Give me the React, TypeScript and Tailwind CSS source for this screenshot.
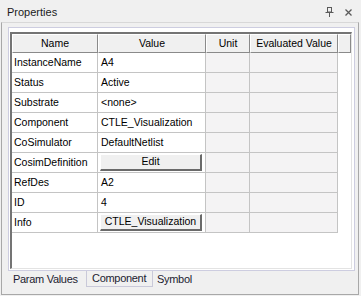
import React from "react"

type Row = { name: string; value: string; button?: boolean }

const rows: Row[] = [
  { name: "InstanceName", value: "A4" },
  { name: "Status", value: "Active" },
  { name: "Substrate", value: "<none>" },
  { name: "Component", value: "CTLE_Visualization" },
  { name: "CoSimulator", value: "DefaultNetlist" },
  { name: "CosimDefinition", value: "Edit", button: true },
  { name: "RefDes", value: "A2" },
  { name: "ID", value: "4" },
  { name: "Info", value: "CTLE_Visualization", button: true },
]

const font = { fontFamily: '"Liberation Sans", Arial, sans-serif' }

function PinIcon() {
  return (
    <svg width="9" height="10" viewBox="0 0 9 10" className="text-[#5a5a5a]">
      <rect x="2.5" y="0.5" width="4" height="4.5" fill="none" stroke="currentColor" />
      <line x1="0.5" y1="5.5" x2="8.5" y2="5.5" stroke="currentColor" />
      <line x1="4.5" y1="5.5" x2="4.5" y2="10" stroke="currentColor" />
    </svg>
  )
}

function CloseIcon() {
  return (
    <svg width="7" height="7" viewBox="0 0 7 7" className="text-[#5a5a5a]">
      <path d="M0.5 0.5 L6.5 6.5 M6.5 0.5 L0.5 6.5" stroke="currentColor" strokeWidth="1.3" />
    </svg>
  )
}

function HeaderCell({ label, w }: { label: string; w: string }) {
  return (
    <div
      className={`${w} flex h-full items-center justify-center border-l border-t border-white border-r border-r-[#8a8a8a] border-b border-b-[#8a8a8a] bg-[#f0f0f0] text-[10.5px] text-black`}
    >
      {label}
    </div>
  )
}

export default function App() {
  return (
    <div className="flex h-[296px] w-[361px] flex-col bg-[#f0f0f0]" style={font}>
      {/* Title bar */}
      <div className="flex h-[22px] items-center justify-between pl-[7px] pr-[9px] pt-[2px]">
        <span className="text-[11px] text-[#1b1b1b]">Properties</span>
        <div className="flex items-center gap-[11px]">
          <PinIcon />
          <CloseIcon />
        </div>
      </div>

      {/* Body */}
      <div className="mb-px ml-px mr-[2px] flex flex-1 flex-col border-x border-b border-t border-[#a8a8a8] border-t-[#d8d8d8]">
        {/* Grid frame */}
        <div className="ml-[6px] mr-[3px] mt-[4px] flex h-[244px] flex-col border border-[#cdcde0] bg-white pb-px pl-px pr-[2px] pt-[4px]">
          <div className="flex flex-1 flex-col border-l-2 border-t-2 border-[#747474] border-b border-r border-b-[#e3e3e3] border-r-[#e3e3e3] bg-white">
            {/* Header */}
            <div className="flex h-[19px]">
              <HeaderCell label="Name" w="w-[86px]" />
              <HeaderCell label="Value" w="w-[108px]" />
              <HeaderCell label="Unit" w="w-[44px]" />
              <HeaderCell label="Evaluated Value" w="w-[88px]" />
              <HeaderCell label="" w="flex-1" />
            </div>

            {/* Rows */}
            {rows.map((r) => (
              <div key={r.name} className="flex h-[20px] text-[10.5px] text-black">
                <div className="flex w-[86px] items-center border-b border-r border-[#c4c4c4] pl-[2px]">
                  {r.name}
                </div>
                <div className="flex w-[108px] items-center border-b border-r border-[#c4c4c4]">
                  {r.button ? (
                    <div className="ml-[2px] mt-px flex h-[17px] w-[102px] items-center justify-center self-start border-l border-t border-white border-b-2 border-r-2 border-b-[#6a6a6a] border-r-[#6a6a6a] bg-[#f0f0f0]">
                      {r.value}
                    </div>
                  ) : (
                    <span className="pl-[3px]">{r.value}</span>
                  )}
                </div>
                <div className="w-[44px] border-b border-r border-[#c4c4c4] bg-[#f4f3f4]" />
                <div className="w-[88px] border-b border-r border-[#c4c4c4] bg-[#f4f3f4]" />
                <div className="flex-1" />
              </div>
            ))}
          </div>
        </div>

        {/* Tabs */}
        <div className="ml-[6px] flex h-[16px] text-[11px] tracking-[-0.3px] text-[#1c1c30]">
          <div className="flex w-[78px] items-center pl-[5px]">Param Values</div>
          <div className="flex w-[67px] items-center border-b border-l border-r border-[#c9c9d9] pl-[5px]">
            Component
          </div>
          <div className="flex items-center pl-[4px]">Symbol</div>
        </div>
      </div>
    </div>
  )
}
